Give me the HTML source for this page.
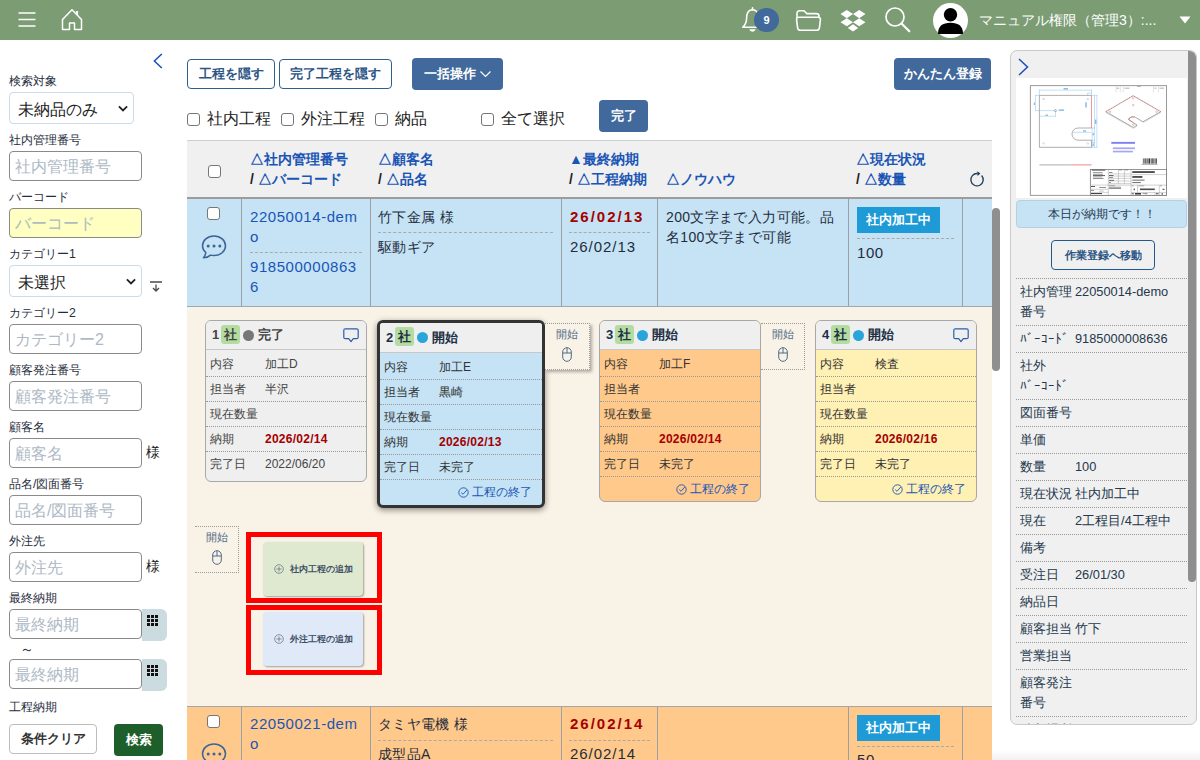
<!DOCTYPE html>
<html lang="ja"><head><meta charset="utf-8">
<style>
*{box-sizing:border-box;margin:0;padding:0}
html,body{width:1200px;height:760px;overflow:hidden;background:#fff}
body{font-family:"Liberation Sans",sans-serif;color:#333;position:relative;font-size:13px}
.abs{position:absolute}
#hdr{position:absolute;left:0;top:0;width:1200px;height:40px;background:#7c9c74}
#hdr svg{position:absolute}
#uname{position:absolute;left:979px;top:10px;color:#fff;font-size:14px;line-height:20px;white-space:nowrap}
/* sidebar */
.lb{position:absolute;left:9px;font-size:12.300px;line-height:16px;color:#1f2d3d;white-space:nowrap}
.in{position:absolute;left:9px;width:133px;height:30px;border:1px solid #8a8a8a;border-radius:4px;background:#fff;font-size:16px;line-height:29px;padding-left:5px;color:#adb9c4;white-space:nowrap;overflow:hidden}
.sel{position:absolute;left:9px;width:125px;height:32px;border:1px solid #c9dbea;border-radius:4px;background:#fff;font-size:16px;line-height:30px;padding-left:8px;padding-top:2px;color:#222;white-space:nowrap}
.sel svg{position:absolute;right:5px;top:12px;width:10px;height:7.300px}
.sama{position:absolute;left:146px;font-size:14px;line-height:16px;color:#222}
.cal{position:absolute;left:142px;width:25px;height:32px;background:#cbdbe0;border-radius:0 6px 6px 0}
.cal i{position:absolute;left:5px;top:6px;width:11px;height:11px;background:
 linear-gradient(#cbdbe0,#cbdbe0) 3px 0/1px 11px no-repeat,
 linear-gradient(#cbdbe0,#cbdbe0) 7px 0/1px 11px no-repeat,
 linear-gradient(#cbdbe0,#cbdbe0) 0 3px/11px 1px no-repeat,
 linear-gradient(#cbdbe0,#cbdbe0) 0 7px/11px 1px no-repeat,#111}
.btn{position:absolute;border-radius:4px;font-weight:bold;font-size:12.500px;text-align:center;white-space:nowrap}
.bo{border:1px solid #2d5f8f;color:#2c5585;background:#fff}
.bf{background:#41699b;color:#fff}
/* main */
#main{position:absolute;left:187px;top:140px;width:805px;height:620px;overflow:hidden}
.cb{position:absolute;width:13px;height:13px;border:1px solid #767676;border-radius:3px;background:#fff}
.ck{position:absolute;font-size:16px;line-height:20px;color:#222;white-space:nowrap}
#thead{position:absolute;left:0;top:0;width:805px;height:59px;background:#f0f0f0;border-top:1px solid #cfcfcf;border-bottom:2px solid #9c9c9c}
.th{position:absolute;font-size:14px;line-height:20px;font-weight:bold;color:#1a55b5;white-space:nowrap}
.th b{color:#222}
.row{position:absolute;left:0;width:805px;border-top:1px solid #a0a7ad;border-bottom:1px solid #a0a7ad}
.row .vl{position:absolute;top:0;bottom:0;width:1px;background:#9aa0a6}
.tx{position:absolute;font-size:15px;line-height:20px;white-space:nowrap;color:#1f2d3d;letter-spacing:.55px}
.lk{color:#1a55b5}
.dash{position:absolute;height:0;border-top:1px dashed #a9a9a9}
.bad{position:absolute;left:670px;width:83px;height:26px;background:#1e9ad6;color:#fff;font-weight:bold;font-size:12.500px;line-height:26px;text-align:center}
#proc{position:absolute;left:0;top:167px;width:805px;height:399px;background:#f9f2e7}
.card{position:absolute;width:162px;border:1px solid #a8a8a8;border-radius:6px;background:#efefef;overflow:hidden}
.card .h{position:relative;height:29px;background:#efefef;border-bottom:1px solid #c8c8c8;font-weight:bold;font-size:13px;line-height:28px;color:#1d2f45;white-space:nowrap}
.card .h .n{position:absolute;left:6px}
.card .h .s{position:absolute;left:15px;top:4px;width:19px;height:19px;border-radius:3px;background:#b4dca0;line-height:19px;text-align:center}
.card .h .d{position:absolute;left:37px;top:9px;width:11px;height:11px;border-radius:6px;background:#2aa5dc}
.card .h .t{position:absolute;left:52px}
.card .h svg{position:absolute;right:7px;top:7px}
.card .r{position:relative;height:25px;border-bottom:1px dotted #999;font-size:12px;line-height:24px;color:inherit;white-space:nowrap}
.card .r:last-child{border-bottom:0}
.card .r span{position:absolute;left:4px}
.card .r em{position:absolute;left:59px;font-style:normal}
.card .r em.dt{font-weight:bold;color:#a40000;letter-spacing:.250px}
.card .r.e{text-align:right;padding-right:10px;color:#1a55b5;font-size:12px}
.card .r.e svg{vertical-align:-2px;margin-right:3px}
.tab{position:absolute;width:45px;height:47px;border:1px dotted #9a9a9a;border-left:0;background:#f9f2e7;text-align:center;font-size:10.500px;line-height:12px;color:#4f6c88;padding-top:4px}
.tab svg{display:block;margin:7px auto 0}
.red{position:absolute;left:59px;width:136px;border:5px solid #f00}
.add{position:absolute;left:12px;top:5px;width:100px;height:54px;border-radius:4px;box-shadow:1px 1px 2px rgba(0,0,0,.35);font-size:8.700px;font-weight:bold;color:#3d4f66;line-height:54px;white-space:nowrap}
.add svg{position:absolute;left:11px;top:22px}
.add span{position:absolute;left:27px}
.card .r.f{height:27px;padding-top:2px}

#panel{position:absolute;left:1010px;top:50px;width:187px;height:675px;border:1px solid #c9c9c9;border-radius:7px;background:#f0f0f0;overflow:hidden}
#panel .pr{position:absolute;left:5px;width:171px;border-top:1px dotted #9a9a9a;font-size:12.500px;line-height:20px;color:#24384d;white-space:nowrap}
#panel .pr span{position:absolute;left:4px;top:3px}
#panel .pr em{position:absolute;left:59px;top:3px;font-style:normal;font-size:12.800px}

</style></head><body>
<div id="hdr">
<svg style="left:18px;top:11px" width="18" height="17" viewBox="0 0 18 17"><path d="M0.5 2H17.5M0.5 8.5H17.5M0.5 15H17.5" stroke="#fff" stroke-width="1.4" fill="none"/></svg>
<svg style="left:61px;top:8px" width="22" height="23" viewBox="0 0 22 23"><path d="M1.5 11.5L11 1.8L20.5 11.5V21.5H13.5V15H8.5V21.5H1.5Z" stroke="#fff" stroke-width="1.5" fill="none" stroke-linejoin="round"/><path d="M16 3V7" stroke="#fff" stroke-width="2.2"/></svg>
<svg style="left:741px;top:7px" width="23" height="27" viewBox="0 0 23 27"><path d="M11.500 2.800C7 2.800 5.600 7 5.600 11C5.600 15.500 4.200 18 1.800 20.200H21.200C18.800 18 17.400 15.500 17.400 11C17.400 7 16 2.800 11.500 2.800Z" stroke="#fff" stroke-width="1.600" fill="none" stroke-linejoin="round"/><path d="M8.300 22.300A3.300 3.300 0 0 0 14.700 22.300Z" fill="#fff"/><path d="M11.500 0.800V2.800" stroke="#fff" stroke-width="1.600" stroke-linecap="round"/></svg>
<div class="abs" style="left:754px;top:8px;width:25px;height:24px;border-radius:12px;background:#41699b;color:#fff;font-weight:bold;font-size:11px;line-height:24px;text-align:center">9</div>
<svg style="left:795px;top:9px" width="27" height="23" viewBox="0 0 27 23"><path d="M2 9V4.300C2 2.800 3 1.800 4.500 1.800H9L11.800 4.600H21.500C23 4.600 24 5.600 24 7.100V8.300" stroke="#fff" stroke-width="1.600" fill="none" stroke-linejoin="round"/><path d="M3.800 8.300H23.200C24.800 8.300 25.600 9.300 25.400 10.800L24.400 18.800C24.200 20.300 23.200 21.200 21.700 21.200H5.300C3.800 21.200 2.800 20.300 2.600 18.800L1.600 10.800C1.400 9.300 2.200 8.300 3.800 8.300Z" stroke="#fff" stroke-width="1.600" fill="none" stroke-linejoin="round"/></svg>
<svg style="left:840px;top:9px" width="26" height="23.500" viewBox="0 0 25 23" preserveAspectRatio="none"><path d="M6.500 1L12.500 5L6.500 9L0.500 5ZM18.500 1L24.500 5L18.500 9L12.500 5ZM6.500 9L12.500 13L6.500 17L0.500 13ZM18.500 9L24.500 13L18.500 17L12.500 13ZM12.500 15L17.500 18.500L12.500 22L7.500 18.500Z" fill="#fff"/></svg>
<svg style="left:884px;top:6px" width="27" height="27" viewBox="0 0 27 27"><circle cx="11" cy="11" r="9" stroke="#fff" stroke-width="1.700" fill="none"/><path d="M17.500 17.500L25.300 25.300" stroke="#fff" stroke-width="2.200" stroke-linecap="round"/></svg>
<svg style="left:933px;top:2.500px" width="35" height="35" viewBox="0 0 35 35"><circle cx="17.500" cy="17.500" r="17.500" fill="#fff"/><circle cx="17.500" cy="11.700" r="6.700" fill="#000"/><path d="M5 31C5 23 9.500 19.800 17.500 19.800C25.500 19.800 30 23 30 31Z" fill="#000"/></svg>
<div id="uname">マニュアル権限（管理3）:...</div>
<svg style="left:1179px;top:16px" width="12" height="8" viewBox="0 0 12 8"><path d="M0.500 0.500H11.500L6 7.500Z" fill="#fff"/></svg>
</div>

<svg class="abs" style="left:151px;top:52px" width="12" height="18" viewBox="0 0 12 18"><path d="M10.800 2L3.400 9L10.800 16" stroke="#1a4fbf" stroke-width="1.500" fill="none"/></svg>
<div class="lb" style="top:73px">検索対象</div>
<div class="sel" style="top:92px">未納品のみ<svg width="11" height="8" viewBox="0 0 11 8"><path d="M1 1.500L5.500 6L10 1.500" stroke="#222" stroke-width="2" fill="none"/></svg></div>
<div class="lb" style="top:132px">社内管理番号</div>
<div class="in" style="top:151px">社内管理番号</div>
<div class="lb" style="top:189px">バーコード</div>
<div class="in" style="top:208px;background:#ffffc2">バーコード</div>
<div class="lb" style="top:246px">カテゴリー1</div>
<div class="sel" style="top:265px;width:133px">未選択<svg width="11" height="8" viewBox="0 0 11 8"><path d="M1 1.500L5.500 6L10 1.500" stroke="#222" stroke-width="2" fill="none"/></svg></div>
<svg class="abs" style="left:150px;top:281px" width="12" height="11" viewBox="0 0 12 11"><path d="M0 1H12M6 3.500V10M3 7L6 10L9 7" stroke="#4a4a4a" stroke-width="1.300" fill="none"/></svg>
<div class="lb" style="top:305px">カテゴリー2</div>
<div class="in" style="top:324px">カテゴリー2</div>
<div class="lb" style="top:362px">顧客発注番号</div>
<div class="in" style="top:381px">顧客発注番号</div>
<div class="lb" style="top:419px">顧客名</div>
<div class="in" style="top:438px">顧客名</div><div class="sama" style="top:444px">様</div>
<div class="lb" style="top:476px">品名/図面番号</div>
<div class="in" style="top:495px">品名/図面番号</div>
<div class="lb" style="top:533px">外注先</div>
<div class="in" style="top:552px">外注先</div><div class="sama" style="top:558px">様</div>
<div class="lb" style="top:590px">最終納期</div>
<div class="in" style="top:609px">最終納期</div><div class="cal" style="top:609px"><i></i></div>
<div class="lb" style="top:641px;left:20px;font-size:14px">～</div>
<div class="in" style="top:659px">最終納期</div><div class="cal" style="top:659px"><i></i></div>
<div class="lb" style="top:699px">工程納期</div>
<div class="btn" style="left:9px;top:724px;width:88px;height:30px;line-height:28px;border:1px solid #bdbdbd;color:#333;background:#fff">条件クリア</div>
<div class="btn" style="left:114px;top:724px;width:49px;height:32px;line-height:32px;background:#1d5e2a;color:#fff">検索</div>

<div class="btn bo" style="left:187px;top:59px;width:88px;height:30px;line-height:28px">工程を隠す</div>
<div class="btn bo" style="left:279px;top:59px;width:113px;height:30px;line-height:28px">完了工程を隠す</div>
<div class="btn bf" style="left:412px;top:58px;width:91px;height:32px;line-height:32px;text-align:left;padding-left:12px">一括操作<svg class="abs" style="left:68px;top:13px" width="11" height="7" viewBox="0 0 11 7"><path d="M0.500 0.500L5.500 5.500L10.500 0.500" stroke="#fff" stroke-width="1.200" fill="none"/></svg></div>
<div class="btn bf" style="left:894px;top:58px;width:97px;height:32px;line-height:32px">かんたん登録</div>
<div class="cb" style="left:187px;top:113px"></div><div class="ck" style="left:207px;top:109px">社内工程</div>
<div class="cb" style="left:281px;top:113px"></div><div class="ck" style="left:301px;top:109px">外注工程</div>
<div class="cb" style="left:375px;top:113px"></div><div class="ck" style="left:395px;top:109px">納品</div>
<div class="cb" style="left:481px;top:113px"></div><div class="ck" style="left:501px;top:109px">全て選択</div>
<div class="btn bf" style="left:599px;top:100px;width:49px;height:32px;line-height:32px">完了</div>

<div id="main"><div id="thead"><div class="cb" style="left:21px;top:24px"></div><div class="th" style="left:63px;top:8px">△社内管理番号<br><b>/</b> △バーコード</div><div class="th" style="left:191px;top:8px">△顧客名<br><b>/</b> △品名</div><div class="th" style="left:382px;top:8px">▲最終納期<br><b>/</b> △工程納期</div><div class="th" style="left:479px;top:28px">△ノウハウ</div><div class="th" style="left:669px;top:8px">△現在状況<br><b>/</b> △数量</div><svg class="abs" style="left:782px;top:30px" width="16" height="17" viewBox="0 0 16 17"><path d="M12.600 4.500A6.200 6.200 0 1 1 8.500 2.500" stroke="#1d3a55" stroke-width="1.300" fill="none"/><path d="M8.300 0.200L11.400 2.600L8.500 5.100Z" fill="#1d3a55"/></svg></div><div class="row" style="top:59px;height:108px;background:#c5e3f5;border-top:0;"><i class="vl" style="left:54px"></i><i class="vl" style="left:183px"></i><i class="vl" style="left:374px"></i><i class="vl" style="left:470px"></i><i class="vl" style="left:661px"></i><i class="vl" style="left:775px"></i><div class="cb" style="left:20px;top:8px"></div><div class="abs" style="left:14px;top:36px"><svg width="26" height="25" viewBox="0 0 26 25"><path d="M13 1C6.500 1 1.500 5.300 1.500 10.800C1.500 13.600 2.800 15.900 4.800 17.500C4.600 19.400 3.800 21.300 2.500 22.800C5.500 22.600 8 21.600 9.500 20.100C10.600 20.400 11.800 20.500 13 20.500C19.500 20.500 24.500 16.300 24.500 10.800C24.500 5.300 19.500 1 13 1Z" stroke="#3b6497" stroke-width="1.500" fill="none" stroke-linejoin="round"/><circle cx="7.200" cy="10.900" r="1.500" fill="#3b6497"/><circle cx="13" cy="10.900" r="1.500" fill="#3b6497"/><circle cx="18.800" cy="10.900" r="1.500" fill="#3b6497"/></svg></div><div class="tx lk" style="left:63px;top:8px">22050014-dem<br>o</div><div class="dash" style="left:63px;top:53px;width:112px"></div><div class="tx lk" style="left:63px;top:58px">918500000863<br>6</div><div class="tx" style="left:191px;top:8px;letter-spacing:.350px;font-size:14px">竹下金属 様</div><div class="dash" style="left:191px;top:33px;width:175px"></div><div class="tx" style="left:191px;top:38px;letter-spacing:.350px;font-size:14px">駆動ギア</div><div class="tx" style="left:383px;top:8px;font-weight:bold;color:#a40000;font-size:15px;letter-spacing:2px">26/02/13</div><div class="dash" style="left:382px;top:33px;width:81px"></div><div class="tx" style="left:383px;top:38px;letter-spacing:.950px">26/02/13</div><div class="tx" style="left:479px;top:8px;letter-spacing:.350px;font-size:14px">200文字まで入力可能。品<br>名100文字まで可能</div><div class="bad" style="top:8px">社内加工中</div><div class="dash" style="left:670px;top:39px;width:97px"></div><div class="tx" style="left:670px;top:44px">100</div></div><div id="proc"><div class="card" style="left:18px;top:13px;height:162px;background:#efefef;color:#444"><div class="h" style="color:#444"><span class="n">1</span><span class="s">社</span><span class="d" style="background:#777"></span><span class="t">完了</span><svg width="16" height="15" viewBox="0 0 16 15"><path d="M2.300 0.800H13.700Q15.200 0.800 15.200 2.300V9.200Q15.200 10.700 13.700 10.700H10.300L8 13.600L5.700 10.700H2.300Q0.800 10.700 0.800 9.200V2.300Q0.800 0.800 2.300 0.800Z" stroke="#2c5fa8" stroke-width="1.200" fill="none" stroke-linejoin="round"/></svg></div><div class="r f"><span>内容</span><em>加工D</em></div><div class="r"><span>担当者</span><em>半沢</em></div><div class="r"><span>現在数量</span><em></em></div><div class="r"><span>納期</span><em class="dt">2026/02/14</em></div><div class="r"><span>完了日</span><em>2022/06/20</em></div></div><div class="card" style="left:190px;top:13px;height:188px;background:#c5e3f5;width:168px;border:3px solid #333;box-shadow:0 2px 6px rgba(0,0,0,.45);"><div class="h" style="height:30px;line-height:29px"><span class="n">2</span><span class="s">社</span><span class="d" style="background:#2aa5dc"></span><span class="t">開始</span></div><div class="r f"><span>内容</span><em>加工E</em></div><div class="r"><span>担当者</span><em>黒崎</em></div><div class="r"><span>現在数量</span><em></em></div><div class="r"><span>納期</span><em class="dt">2026/02/13</em></div><div class="r"><span>完了日</span><em>未完了</em></div><div class="r e"><svg width="11" height="11" viewBox="0 0 11 11"><circle cx="5.500" cy="5.500" r="4.700" stroke="#1a55b5" stroke-width="0.900" fill="none"/><path d="M3.200 5.600L5 7.300L8.800 3" stroke="#1a55b5" stroke-width="0.900" fill="none"/></svg>工程の終了</div></div><div class="tab" style="left:358px;top:16px;height:47px;box-shadow:2px 2px 3px rgba(0,0,0,.3)">開始<svg width="10" height="15" viewBox="0 0 10 15"><rect x="0.700" y="0.700" width="8.600" height="13.600" rx="4.300" stroke="#4f6c88" stroke-width="1" fill="none"/><path d="M0.700 6H9.300M5 0.700V6" stroke="#4f6c88" stroke-width="1" fill="none"/></svg></div><div class="card" style="left:412px;top:13px;height:182px;background:#ffc98b;"><div class="h"><span class="n">3</span><span class="s">社</span><span class="d" style="background:#2aa5dc"></span><span class="t">開始</span></div><div class="r f"><span>内容</span><em>加工F</em></div><div class="r"><span>担当者</span><em></em></div><div class="r"><span>現在数量</span><em></em></div><div class="r"><span>納期</span><em class="dt">2026/02/14</em></div><div class="r"><span>完了日</span><em>未完了</em></div><div class="r e"><svg width="11" height="11" viewBox="0 0 11 11"><circle cx="5.500" cy="5.500" r="4.700" stroke="#1a55b5" stroke-width="0.900" fill="none"/><path d="M3.200 5.600L5 7.300L8.800 3" stroke="#1a55b5" stroke-width="0.900" fill="none"/></svg>工程の終了</div></div><div class="tab" style="left:574px;top:16px;width:44px">開始<svg width="10" height="15" viewBox="0 0 10 15"><rect x="0.700" y="0.700" width="8.600" height="13.600" rx="4.300" stroke="#4f6c88" stroke-width="1" fill="none"/><path d="M0.700 6H9.300M5 0.700V6" stroke="#4f6c88" stroke-width="1" fill="none"/></svg></div><div class="card" style="left:628px;top:13px;height:182px;background:#fff0b4;"><div class="h"><span class="n">4</span><span class="s">社</span><span class="d" style="background:#2aa5dc"></span><span class="t">開始</span><svg width="16" height="15" viewBox="0 0 16 15"><path d="M2.300 0.800H13.700Q15.200 0.800 15.200 2.300V9.200Q15.200 10.700 13.700 10.700H10.300L8 13.600L5.700 10.700H2.300Q0.800 10.700 0.800 9.200V2.300Q0.800 0.800 2.300 0.800Z" stroke="#2c5fa8" stroke-width="1.200" fill="none" stroke-linejoin="round"/></svg></div><div class="r f"><span>内容</span><em>検査</em></div><div class="r"><span>担当者</span><em></em></div><div class="r"><span>現在数量</span><em></em></div><div class="r"><span>納期</span><em class="dt">2026/02/16</em></div><div class="r"><span>完了日</span><em>未完了</em></div><div class="r e"><svg width="11" height="11" viewBox="0 0 11 11"><circle cx="5.500" cy="5.500" r="4.700" stroke="#1a55b5" stroke-width="0.900" fill="none"/><path d="M3.200 5.600L5 7.300L8.800 3" stroke="#1a55b5" stroke-width="0.900" fill="none"/></svg>工程の終了</div></div><div class="tab" style="left:8px;top:219px;width:44px;height:47px">開始<svg width="10" height="15" viewBox="0 0 10 15"><rect x="0.700" y="0.700" width="8.600" height="13.600" rx="4.300" stroke="#4f6c88" stroke-width="1" fill="none"/><path d="M0.700 6H9.300M5 0.700V6" stroke="#4f6c88" stroke-width="1" fill="none"/></svg></div><div class="red" style="top:225px;height:71px"><div class="add" style="background:#dfe9d0"><svg width="10" height="10" viewBox="0 0 10 10"><circle cx="5" cy="5" r="4.300" stroke="#5a6a7a" stroke-width="0.700" fill="none"/><path d="M5 2.500V7.500M2.500 5H7.500" stroke="#5a6a7a" stroke-width="0.700"/></svg><span>社内工程の追加</span></div></div><div class="red" style="top:298px;height:70px"><div class="add" style="background:#dfe9f7;top:2px"><svg width="10" height="10" viewBox="0 0 10 10"><circle cx="5" cy="5" r="4.300" stroke="#5a6a7a" stroke-width="0.700" fill="none"/><path d="M5 2.500V7.500M2.500 5H7.500" stroke="#5a6a7a" stroke-width="0.700"/></svg><span>外注工程の追加</span></div></div></div><div class="row" style="top:566px;height:60px;background:#ffc98b;"><i class="vl" style="left:54px"></i><i class="vl" style="left:183px"></i><i class="vl" style="left:374px"></i><i class="vl" style="left:470px"></i><i class="vl" style="left:661px"></i><i class="vl" style="left:775px"></i><div class="cb" style="left:20px;top:8px"></div><div class="abs" style="left:14px;top:36px"><svg width="26" height="25" viewBox="0 0 26 25"><path d="M13 1C6.500 1 1.500 5.300 1.500 10.800C1.500 13.600 2.800 15.900 4.800 17.500C4.600 19.400 3.800 21.300 2.500 22.800C5.500 22.600 8 21.600 9.500 20.100C10.600 20.400 11.800 20.500 13 20.500C19.500 20.500 24.500 16.300 24.500 10.800C24.500 5.300 19.500 1 13 1Z" stroke="#3b6497" stroke-width="1.500" fill="none" stroke-linejoin="round"/><circle cx="7.200" cy="10.900" r="1.500" fill="#3b6497"/><circle cx="13" cy="10.900" r="1.500" fill="#3b6497"/><circle cx="18.800" cy="10.900" r="1.500" fill="#3b6497"/></svg></div><div class="tx lk" style="left:63px;top:7px">22050021-dem<br>o</div><div class="dash" style="left:63px;top:53px;width:112px"></div><div class="tx lk" style="left:63px;top:57px"></div><div class="tx" style="left:191px;top:7px;letter-spacing:.350px;font-size:14px">タミヤ電機 様</div><div class="dash" style="left:191px;top:33px;width:175px"></div><div class="tx" style="left:191px;top:37px;letter-spacing:.350px;font-size:14px">成型品A</div><div class="tx" style="left:383px;top:7px;font-weight:bold;color:#a40000;font-size:15px;letter-spacing:2px">26/02/14</div><div class="dash" style="left:382px;top:33px;width:81px"></div><div class="tx" style="left:383px;top:37px;letter-spacing:.950px">26/02/14</div><div class="tx" style="left:479px;top:7px;letter-spacing:.350px;font-size:14px"></div><div class="bad" style="top:8px">社内加工中</div><div class="dash" style="left:670px;top:39px;width:97px"></div><div class="tx" style="left:670px;top:43px">50</div></div></div><div class="abs" style="left:992px;top:208px;width:8px;height:163px;border-radius:4px;background:#8f8f8f"></div>
<div id="panel"><svg class="abs" style="left:7px;top:7px" width="11" height="18" viewBox="0 0 11 18"><path d="M1 1L9.500 9L1 17" stroke="#1a4fbf" stroke-width="1.500" fill="none"/></svg><svg class="abs" style="left:5px;top:27px" width="171" height="120" viewBox="0 0 171 120"><rect width="171" height="120" fill="#fff"/><rect x="14.300" y="7.700" width="136.300" height="109.600" fill="#fff" stroke="#808080" stroke-width="0.800"/><path d="M75.500 17.400H23.400V69.300H75.500V62.200H62.100A6.100 6.100 0 0 1 62.100 50H75.500" stroke="#8c8c8c" stroke-width="0.700" fill="none"/><path d="M75.500 17.400V50" stroke="#e07070" stroke-width="0.700" fill="none"/><g stroke="#6fb3e8" stroke-width="0.450" fill="none" opacity=".9"><path d="M23.400 12.200H75.500M23.400 11.300V17.400M75.500 11.300V17.400"/><path d="M19.500 17.400V32.400M19 17.400H23.400M19 32.600H39.500M23.400 38.200H39.500M39.500 32.600V38.800"/><path d="M78.500 17.400V69.300M80.900 17.400V69.300M75.500 17.400H81.500M75.500 69.300H81.500M75.500 50H79M75.500 62.200H79M75.500 64.500H79"/><path d="M57.100 54.300H75.500M71.600 15V17.400M71.600 15H75.500M70 24V29.800M76.200 50V69.300"/></g><g fill="#6fb3e8" opacity=".85"><rect x="47.500" y="10" width="4.500" height="1.500"/><rect x="17.800" y="24.500" width="1.200" height="2.500"/><rect x="29.500" y="36.600" width="2.500" height="1.300"/><rect x="42.700" y="31.400" width="5.300" height="1.500"/><rect x="79" y="41.500" width="1.400" height="4.500"/><rect x="67" y="52.300" width="3" height="1.400"/><rect x="69.300" y="24.500" width="1.400" height="4.800"/><rect x="76.600" y="55" width="1.300" height="2.400"/><rect x="76.600" y="65.500" width="1.300" height="2.400"/></g><path d="M38.200 32.600L39.500 31.100L40.800 32.600L39.500 34.100Z" stroke="#777" stroke-width="0.500" fill="none"/><path d="M26.6 21L27.6 20L28.6 21L27.6 22Z" stroke="#999" stroke-width="0.400" fill="none"/><path d="M70.8 21L71.8 20L72.8 21L71.8 22Z" stroke="#999" stroke-width="0.400" fill="none"/><path d="M26.6 65.3L27.6 64.3L28.6 65.3L27.6 66.3Z" stroke="#999" stroke-width="0.400" fill="none"/><path d="M70.8 65.3L71.8 64.3L72.8 65.3L71.8 66.3Z" stroke="#999" stroke-width="0.400" fill="none"/><path d="M144.800 33.700L126.900 43.800L120.600 40C118 38.300 114.500 38.600 112.500 41.400L121.100 47.200L117.400 49.500L89.800 33.700" stroke="#777" stroke-width="0.650" fill="none"/><path d="M144.800 34.600L127 44.700M121.100 48.100L117.400 50.400L89.800 34.600" stroke="#aaa" stroke-width="0.400" fill="none"/><path d="M89.800 33.700L117.200 17.700L144.800 33.700" stroke="#8a6a6a" stroke-width="0.600" fill="none"/><path d="M89.800 33.700L117.200 17.700L144.800 33.700" stroke="#e06060" stroke-width="0.600" stroke-dasharray="1 2" fill="none"/><path d="M118.500 38.700C115.500 38.400 113.200 39.800 112.500 41.400L116.500 44.200" stroke="#d05050" stroke-width="0.500" fill="none"/><circle cx="117.2" cy="20.3" r="0.800" stroke="#c66" stroke-width="0.400" fill="none"/><circle cx="117.2" cy="27.2" r="0.800" stroke="#c66" stroke-width="0.400" fill="none"/><circle cx="94" cy="33.7" r="0.800" stroke="#c66" stroke-width="0.400" fill="none"/><circle cx="140.6" cy="33.7" r="0.800" stroke="#c66" stroke-width="0.400" fill="none"/><circle cx="117.4" cy="46.6" r="0.800" stroke="#c66" stroke-width="0.400" fill="none"/><g fill="#2a2af0"><rect x="95.300" y="63.900" width="23.700" height="1.900" opacity=".6"/><rect x="96.900" y="69.400" width="22.100" height="1.700" opacity=".42"/><rect x="96.900" y="72.700" width="20" height="1.700" opacity=".42"/></g><rect x="126.9" y="80.400" width="0.7" height="5.300" fill="#333"/><rect x="128.1" y="80.400" width="0.5" height="5.300" fill="#333"/><rect x="129.3" y="80.400" width="1.1" height="5.300" fill="#333"/><rect x="130.9" y="80.400" width="0.7" height="5.300" fill="#333"/><rect x="132.0" y="80.400" width="0.5" height="5.300" fill="#333"/><rect x="132.9" y="80.400" width="1.1" height="5.300" fill="#333"/><rect x="134.7" y="80.400" width="0.9" height="5.300" fill="#333"/><rect x="136.0" y="80.400" width="0.7" height="5.300" fill="#333"/><rect x="137.4" y="80.400" width="0.9" height="5.300" fill="#333"/><rect x="138.8" y="80.400" width="0.7" height="5.300" fill="#333"/><rect x="139.9" y="80.400" width="0.9" height="5.300" fill="#333"/><rect x="125.500" y="85.900" width="16" height="0.800" fill="#999"/><path d="M23.400 86.800H55.500" stroke="#bdbdbd" stroke-width="1.200"/><path d="M55.500 86.800H75.500" stroke="#f2a0a0" stroke-width="1.200"/><path d="M100 7.700V14.500M104.300 7.700V14.500M107.200 7.700V14.500M137.400 7.700V14.500M142.500 7.700V14.500" stroke="#c4c4c4" stroke-width="0.450" fill="none"/><g fill="#aaa"><rect x="100.500" y="9.700" width="2.500" height="0.900"/><rect x="108.500" y="9.700" width="5" height="0.900"/><rect x="121" y="8" width="4" height="0.800"/><rect x="138.500" y="9.700" width="2" height="0.900"/><rect x="143.500" y="9.700" width="4.500" height="0.900"/></g><rect x="74.300" y="91.400" width="76.300" height="25.900" fill="#fff" stroke="#6a6a6a" stroke-width="0.700"/><path d="M92.300 91.400V117.300M115.100 91.400V117.300M102.400 91.400V105.600M108.400 91.400V105.600M115.100 96.600H150.600M74.300 107.100H150.600M92.300 95.900H115.100M92.300 98.100H115.100M92.300 100.400H115.100M92.300 103H115.100M92.300 105.600H115.100M121.500 107.100V114.600M143.300 107.100V117.300M115.100 114.600H150.600M74.300 111.300H92.300M74.300 114.400H92.300M130 114.600V117.300M139 114.600V117.300" stroke="#8a8a8a" stroke-width="0.400" fill="none"/><g fill="#222"><rect x="116.300" y="93.300" width="22.500" height="1.500"/><rect x="116.300" y="98.200" width="10.100" height="1.500"/><rect x="117.700" y="110.600" width="1" height="1.600"/><rect x="124" y="110.500" width="14.800" height="1.600" opacity=".8"/><rect x="119" y="115.100" width="6" height="1.400"/><rect x="146.500" y="110.800" width="2" height="1.200" opacity=".7"/><rect x="75" y="115" width="11" height="1.100" opacity=".85"/><rect x="75.900" y="91.700" width="13.400" height="0.900" opacity=".8"/></g><g fill="#777"><rect x="116.300" y="101.600" width="12.300" height="1.100"/><rect x="116.300" y="104" width="8.500" height="1.100"/><rect x="77" y="94.200" width="9.500" height="0.700"/><rect x="77" y="95.800" width="10" height="0.800"/><rect x="77" y="97.200" width="12" height="0.900" fill="#444"/><rect x="77" y="98.600" width="9" height="0.700"/><rect x="77" y="100" width="10.500" height="0.800"/><rect x="93" y="94" width="3.500" height="0.800"/><rect x="93" y="97" width="4.500" height="0.800" fill="#444"/><rect x="93" y="99.100" width="4" height="0.800"/><rect x="93" y="101.900" width="5" height="0.800" fill="#444"/><rect x="93" y="104" width="2" height="0.800"/><rect x="75" y="108" width="4" height="0.800" fill="#333"/><rect x="83.200" y="109" width="6.800" height="0.800"/><rect x="75" y="112" width="3" height="0.800"/><rect x="83.200" y="112.700" width="4.500" height="0.700" fill="#aaa"/><rect x="93" y="107.500" width="6" height="0.600"/><rect x="93" y="108.800" width="12" height="0.800"/><rect x="93" y="110" width="12" height="0.800"/><rect x="103" y="91.700" width="3" height="0.600"/><rect x="109" y="91.700" width="3" height="0.600"/><rect x="115.800" y="107.600" width="2" height="0.600"/><rect x="122.300" y="107.600" width="6" height="0.600"/><rect x="144" y="107.600" width="2" height="0.600"/><rect x="115.800" y="115.300" width="2" height="0.900" fill="#333"/><rect x="126.500" y="115.300" width="5" height="0.700"/><rect x="140" y="115.300" width="2.500" height="0.900" fill="#333"/><rect x="145.500" y="115.300" width="1.500" height="1.200" fill="#444"/></g></svg><div class="abs" style="left:5px;top:149px;width:171px;height:28px;border:1px solid #b4d0e4;border-radius:4px;background:#c5e3f5;text-align:center;font-size:12px;line-height:26px;color:#24384d">本日が納期です！！</div><div class="btn bo" style="left:40px;top:189px;width:104px;height:30px;line-height:28px;font-size:11px;background:transparent;border-color:#1e5a8e">作業登録へ移動</div><div class="pr" style="top:227px;height:50px"><span>社内管理<br>番号</span><em>22050014-demo</em></div><div class="pr" style="top:274px;height:50px"><span>ﾊﾞｰｺｰﾄﾞ</span><em>9185000008636</em></div><div class="pr" style="top:301px;height:50px"><span>社外<br>ﾊﾞｰｺｰﾄﾞ</span><em></em></div><div class="pr" style="top:348px;height:50px"><span>図面番号</span><em></em></div><div class="pr" style="top:375px;height:50px"><span>単価</span><em></em></div><div class="pr" style="top:402px;height:50px"><span>数量</span><em>100</em></div><div class="pr" style="top:429px;height:50px"><span>現在状況</span><em>社内加工中</em></div><div class="pr" style="top:456px;height:50px"><span>現在</span><em>2工程目/4工程中</em></div><div class="pr" style="top:483px;height:50px"><span>備考</span><em></em></div><div class="pr" style="top:510px;height:50px"><span>受注日</span><em>26/01/30</em></div><div class="pr" style="top:537px;height:50px"><span>納品日</span><em></em></div><div class="pr" style="top:564px;height:50px"><span>顧客担当</span><em>竹下</em></div><div class="pr" style="top:591px;height:50px"><span>営業担当</span><em></em></div><div class="pr" style="top:618px;height:50px"><span>顧客発注<br>番号</span><em></em></div><div class="pr" style="top:665px;height:50px"><span>納入場所</span><em></em></div><div class="abs" style="left:177px;top:0;width:8px;height:531px;background:#8e8e8e;border-radius:0 6px 4px 4px"></div></div><div class="abs" style="left:992px;top:750px;width:208px;height:10px;background:linear-gradient(rgba(0,0,0,0),rgba(0,0,0,.06))"></div>
</body></html>
